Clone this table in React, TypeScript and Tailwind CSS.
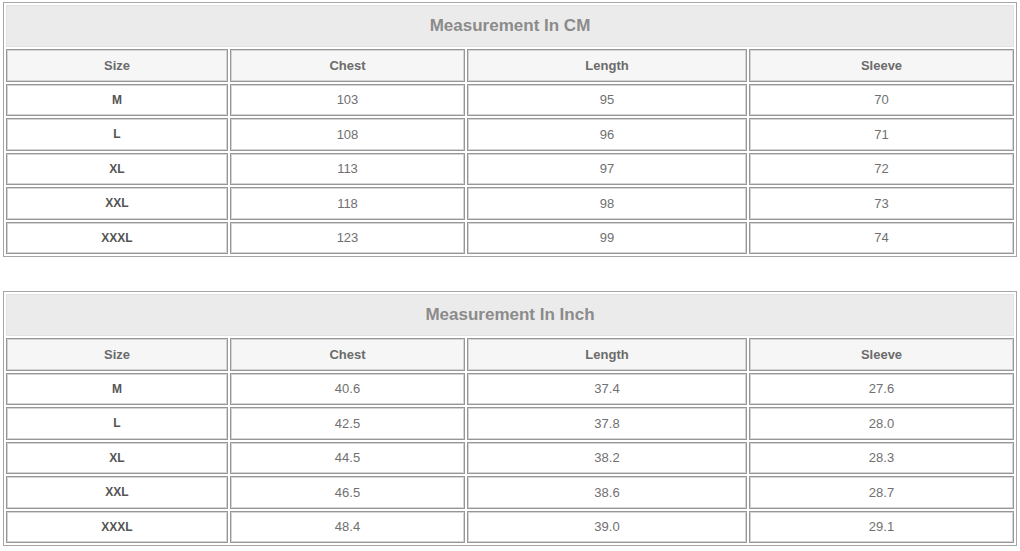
const cm = [
  ["M", "103", "95", "70"],
  ["L", "108", "96", "71"],
  ["XL", "113", "97", "72"],
  ["XXL", "118", "98", "73"],
  ["XXXL", "123", "99", "74"],
];

const inch = [
  ["M", "40.6", "37.4", "27.6"],
  ["L", "42.5", "37.8", "28.0"],
  ["XL", "44.5", "38.2", "28.3"],
  ["XXL", "46.5", "38.6", "28.7"],
  ["XXXL", "48.4", "39.0", "29.1"],
];

const cell = "h-[32.5px] p-0 text-center align-middle border border-[#979797] shadow-[inset_1px_1px_0_#d4d4d4,inset_-1px_-1px_0_#d4d4d4]";

function SizeTable({ title, rows }: { title: string; rows: string[][] }) {
  return (
    <table className="ml-[3px] w-[1014px] table-fixed border-separate border-spacing-[2px] border border-[#a6a6a6] bg-white">
      <colgroup>
        <col className="w-[222px]" />
        <col className="w-[235px]" />
        <col className="w-[280px]" />
        <col />
      </colgroup>
      <thead>
        <tr>
          <th colSpan={4} className="h-[42px] p-0 text-center align-middle bg-[#ebebeb] text-[17px] font-bold text-[#8b8b8b] shadow-[inset_0_0_0_1px_#e2e2e2]">
            {title}
          </th>
        </tr>
        <tr>
          {["Size", "Chest", "Length", "Sleeve"].map((h) => (
            <th key={h} className={`${cell} bg-[#f6f6f6] text-[13px] font-bold text-[#6b6b6b]`}>
              {h}
            </th>
          ))}
        </tr>
      </thead>
      <tbody>
        {rows.map((r) => (
          <tr key={r[0]}>
            <td className={`${cell} text-[12px] font-bold text-[#555]`}>{r[0]}</td>
            <td className={`${cell} text-[13px] text-[#707070]`}>{r[1]}</td>
            <td className={`${cell} text-[13px] text-[#707070]`}>{r[2]}</td>
            <td className={`${cell} text-[13px] text-[#707070]`}>{r[3]}</td>
          </tr>
        ))}
      </tbody>
    </table>
  );
}

export default function App() {
  return (
    <div className="w-[1020px] h-[551px] bg-white pt-[2px] font-['Liberation_Sans',Arial,sans-serif] flex flex-col gap-[34px]">
      <SizeTable title="Measurement In CM" rows={cm} />
      <SizeTable title="Measurement In Inch" rows={inch} />
    </div>
  );
}
